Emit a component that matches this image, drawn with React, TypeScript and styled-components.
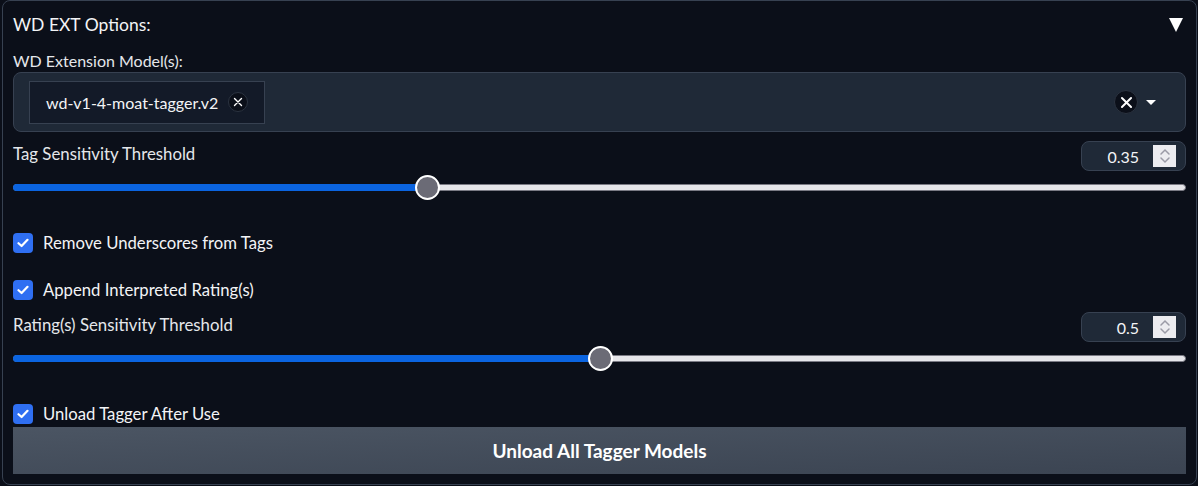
import React from "react";
import styled, { createGlobalStyle } from "styled-components";

const Global = createGlobalStyle`
  html, body { margin: 0; padding: 0; background: #0b0f19; }
  body { font-family: "Lato", "Liberation Sans", sans-serif; color: #e5e7eb; }
  * { box-sizing: border-box; }
`;

const Panel = styled.div`
  margin: 0 2px;
  width: 1195px;
  height: 485px;
  border: 1px solid #374151;
  border-radius: 8px;
  background: #0b0f19;
  padding: 13px 10px 0 10px;
  display: flex;
  flex-direction: column;
`;

const TitleRow = styled.div`
  display: flex;
  justify-content: space-between;
  align-items: center;
  height: 22px;
`;

const Title = styled.span`
  font-size: 17.5px;
  color: #f3f4f6;
  line-height: 22px;
`;

const Caret = styled.span`
  width: 0;
  height: 0;
  border-left: 7px solid transparent;
  border-right: 7px solid transparent;
  border-top: 14px solid #ffffff;
  margin-right: 3px;
`;

const Label = styled.div<{ $mt?: number }>`
  font-size: 16px;
  line-height: 20px;
  color: #e5e7eb;
  margin-top: ${(p) => p.$mt ?? 0}px;
`;

const Dropdown = styled.div`
  margin-top: 1px;
  height: 60px;
  border: 1px solid #374151;
  border-radius: 8px;
  background: #1f2937;
  display: flex;
  align-items: center;
  padding: 0 29px 0 15px;
`;

const Token = styled.div`
  height: 43px;
  display: flex;
  align-items: center;
  gap: 10px;
  padding: 0 16px;
  border: 1px solid #374151;
  background: #131a28;
  font-size: 16px;
  color: #f3f4f6;
`;

const CircleBtn = styled.span<{ $size: number }>`
  width: ${(p) => p.$size}px;
  height: ${(p) => p.$size}px;
  border-radius: 50%;
  background: #0b0f19;
  border: 1px solid #2b3340;
  display: inline-flex;
  align-items: center;
  justify-content: center;
`;

const Spacer = styled.div`
  flex: 1;
`;

const DropArrow = styled.span`
  width: 0;
  height: 0;
  border-left: 5px solid transparent;
  border-right: 5px solid transparent;
  border-top: 5px solid #ffffff;
  margin-left: 8px;
`;

const SliderHeader = styled.div<{ $mt: number }>`
  display: flex;
  justify-content: space-between;
  align-items: flex-start;
  margin-top: ${(p) => p.$mt}px;
`;

const SliderLabel = styled.span`
  font-size: 16.8px;
  line-height: 20px;
  padding-top: 3px;
  color: #e5e7eb;
`;

const NumberBox = styled.div`
  width: 105px;
  height: 30px;
  border: 1px solid #374151;
  border-radius: 8px;
  background: #1f2937;
  display: flex;
  align-items: center;
  justify-content: flex-end;
  padding-right: 9px;
  gap: 14px;
`;

const NumberValue = styled.span`
  font-size: 16px;
  color: #f3f4f6;
`;

const Spinner = styled.span`
  width: 23px;
  height: 22px;
  background: #ececf0;
  display: inline-flex;
  align-items: center;
  justify-content: center;
`;

const Track = styled.div<{ $mt: number }>`
  position: relative;
  margin-top: ${(p) => p.$mt}px;
  height: 7px;
  border-radius: 4px;
  background: #e6e6ea;
  border: 1px solid #7a7a84;
`;

const Fill = styled.div`
  position: absolute;
  left: -1px;
  top: -1px;
  bottom: -1px;
  background: #0b64e0;
  border-radius: 4px 0 0 4px;
`;

const Thumb = styled.div`
  position: absolute;
  top: 50%;
  width: 25px;
  height: 25px;
  margin-left: -12.5px;
  margin-top: -12.5px;
  border-radius: 50%;
  background: #6b6b76;
  border: 2px solid #ffffff;
`;

const CheckRow = styled.label<{ $mt: number }>`
  display: flex;
  align-items: center;
  gap: 10px;
  margin-top: ${(p) => p.$mt}px;
  height: 20px;
  font-size: 16.7px;
  color: #f3f4f6;
`;

const Box = styled.span`
  width: 20px;
  height: 20px;
  border-radius: 4px;
  background: #2f6ff2;
  display: inline-flex;
  align-items: center;
  justify-content: center;
`;

const Button = styled.button`
  margin-top: 3px;
  height: 47px;
  border: none;
  background: linear-gradient(to bottom right, #4b5563, #3b4452);
  color: #ffffff;
  font-family: "Lato", "Liberation Sans", sans-serif;
  font-weight: 700;
  font-size: 19px;
  cursor: pointer;
`;

const XIcon = ({ s, w }: { s: number; w: number }) => (
  <svg width={s} height={s} viewBox="0 0 10 10">
    <path d="M1.5 1.5 L8.5 8.5 M8.5 1.5 L1.5 8.5" stroke="#fff" strokeWidth={w} strokeLinecap="round" />
  </svg>
);

const Check = () => (
  <svg width="12" height="10" viewBox="0 0 12 10">
    <path d="M1.5 5.2 L4.6 8 L10.5 1.8" stroke="#fff" strokeWidth="2.2" fill="none" strokeLinecap="round" strokeLinejoin="round" />
  </svg>
);

const Chevrons = () => (
  <svg width="12" height="18" viewBox="0 0 12 18">
    <path d="M2 7 L6 3 L10 7 M2 11 L6 15 L10 11" stroke="#9a9aa6" strokeWidth="1.5" fill="none" strokeLinecap="round" />
  </svg>
);

const Slider = ({ label, value, pct, mt }: { label: string; value: string; pct: number; mt: number }) => (
  <>
    <SliderHeader $mt={mt}>
      <SliderLabel>{label}</SliderLabel>
      <NumberBox>
        <NumberValue>{value}</NumberValue>
        <Spinner>
          <Chevrons />
        </Spinner>
      </NumberBox>
    </SliderHeader>
    <Track $mt={13}>
      <Fill style={{ width: `${pct}%` }} />
      <Thumb style={{ left: `${pct}%` }} />
    </Track>
  </>
);

const Checkbox = ({ label, mt }: { label: string; mt: number }) => (
  <CheckRow $mt={mt}>
    <Box>
      <Check />
    </Box>
    {label}
  </CheckRow>
);

export default function App() {
  return (
    <>
      <Global />
      <Panel>
        <TitleRow>
          <Title>WD EXT Options:</Title>
          <Caret />
        </TitleRow>
        <Label $mt={15}>WD Extension Model(s):</Label>
        <Dropdown>
          <Token>
            wd-v1-4-moat-tagger.v2
            <CircleBtn $size={20}>
              <XIcon s={10} w={1.4} />
            </CircleBtn>
          </Token>
          <Spacer />
          <CircleBtn $size={24}>
            <XIcon s={13} w={1.5} />
          </CircleBtn>
          <DropArrow />
        </Dropdown>
        <Slider label="Tag Sensitivity Threshold" value="0.35" pct={35.3} mt={9} />
        <Checkbox label="Remove Underscores from Tags" mt={42} />
        <Checkbox label="Append Interpreted Rating(s)" mt={27} />
        <Slider label="Rating(s) Sensitivity Threshold" value="0.5" pct={50.1} mt={12} />
        <Checkbox label="Unload Tagger After Use" mt={42} />
        <Button>Unload All Tagger Models</Button>
      </Panel>
    </>
  );
}
